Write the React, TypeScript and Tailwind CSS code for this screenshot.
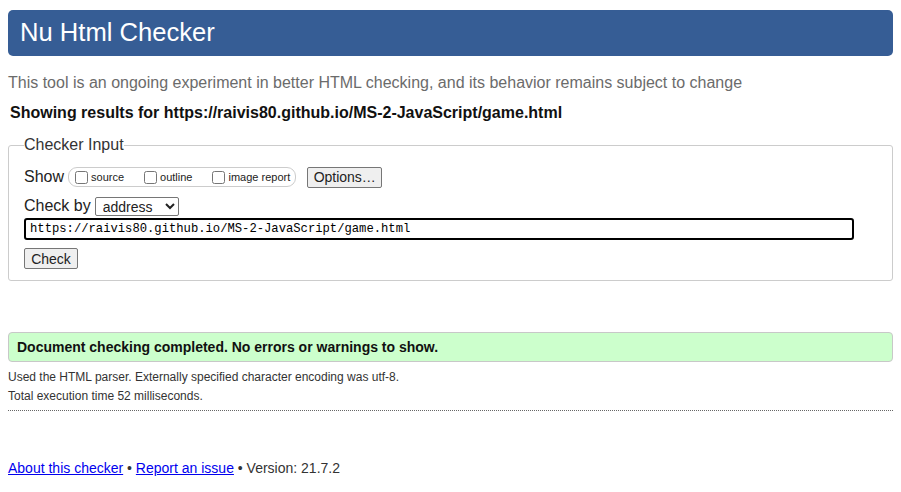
import React from 'react';

const App: React.FC = () => {
  const url = 'https://raivis80.github.io/MS-2-JavaScript/game.html';

  return (
    <div className="min-h-screen bg-white px-2 pt-[10px] text-[#222] font-['Liberation_Sans',Arial,sans-serif]">
      {/* Header */}
      <div className="h-[46px] rounded-[5px] bg-[#365d95] pl-3 flex items-center">
        <h1 className="text-[25.6px] leading-none text-white">Nu Html Checker</h1>
      </div>

      <p className="mt-[18px] text-[16px] leading-[18px] text-[#6b6b6b]">
        This tool is an ongoing experiment in better HTML checking, and its behavior remains subject to change
      </p>
      <p className="mt-[12px] ml-[2px] text-[16px] leading-[18px] font-bold text-[#111]">
        Showing results for {url}
      </p>

      {/* Checker input */}
      <fieldset className="mt-[14px] border border-[#cccccc] rounded-[3px] pl-[15px] pb-[11px]">
        <legend className="text-[16px] leading-[18px] text-[#333]">Checker Input</legend>

        <div className="mt-[12px] flex items-center h-[22px]">
          <span className="text-[16px] mr-[4px]">Show</span>
          <div className="flex items-center h-[20px] border border-[#cccccc] rounded-[9px] pl-[6px] pr-[5px] text-[11px]">
            <label className="flex items-center">
              <input type="checkbox" className="w-[13px] h-[13px] mr-[3px]" />
              <span>source</span>
            </label>
            <label className="flex items-center ml-[20px]">
              <input type="checkbox" className="w-[13px] h-[13px] mr-[3px]" />
              <span>outline</span>
            </label>
            <label className="flex items-center ml-[20px]">
              <input type="checkbox" className="w-[13px] h-[13px] mr-[3px]" />
              <span>image report</span>
            </label>
          </div>
          <button className="ml-[11px] h-[21px] w-[75px] border border-[#767676] rounded-[2px] bg-[#efefef] text-[14px] leading-none">
            Options…
          </button>
        </div>

        <div className="mt-[8px] flex items-center h-[20px]">
          <span className="text-[16px] mr-[4px]">Check by</span>
          <select className="h-[19px] w-[84px] border border-[#767676] rounded-[2px] text-[14px] leading-none pl-[3px] appearance-auto bg-white" defaultValue="address">
            <option value="address">address</option>
          </select>
        </div>

        <input
          readOnly
          value={url}
          className="block mt-[2px] w-[830px] h-[22px] border-2 border-black rounded-[3px] px-[4px] text-[12.2px] font-['Liberation_Mono',monospace] text-black outline-none"
        />

        <button className="block mt-[8px] h-[21px] w-[54px] border border-[#767676] rounded-[2px] bg-[#efefef] text-[14px] leading-none">
          Check
        </button>
      </fieldset>

      {/* Result */}
      <div className="mt-[51px] h-[30px] rounded-[4px] border border-[#c8c8c8] bg-[#ccffcc] pl-[8px] flex items-center">
        <span className="text-[14px] font-bold text-[#111]">Document checking completed. No errors or warnings to show.</span>
      </div>

      <p className="mt-[8px] text-[12px] leading-[14px] text-[#333]">
        Used the HTML parser. Externally specified character encoding was utf-8.
      </p>
      <p className="mt-[5px] text-[12px] leading-[14px] text-[#333]">Total execution time 52 milliseconds.</p>
      <div className="mt-[7px] border-t border-dotted border-[#666]" />

      <p className="mt-[49px] text-[14px] leading-[16px] text-[#333]">
        <a href="#" className="text-[#0000ee] underline">About this checker</a>
        {' • '}
        <a href="#" className="text-[#0000ee] underline">Report an issue</a>
        {' • Version: 21.7.2'}
      </p>
    </div>
  );
};

export default App;
